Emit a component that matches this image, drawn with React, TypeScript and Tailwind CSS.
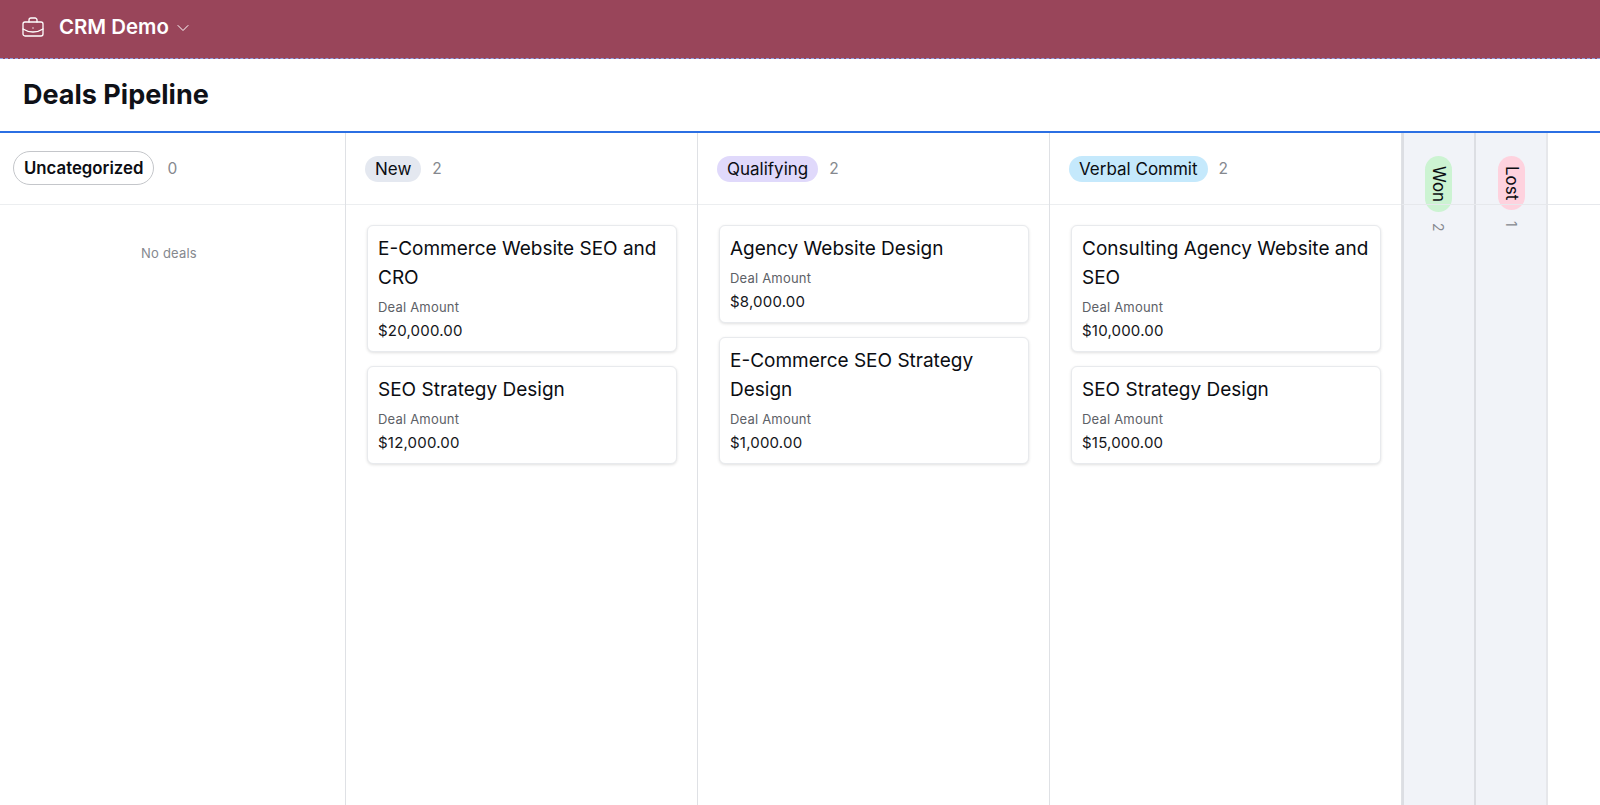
import React from "react";
import { BriefcaseBusiness, ChevronDown } from "lucide-react";

type Deal = { title: string; amount: string };

function Card({ title, amount }: Deal) {
  return (
    <div className="rounded-md border border-[#e8eaed] bg-white px-[10px] pt-[8px] pb-[9px] shadow-[0_1px_3px_rgba(0,0,0,0.12)]">
      <div className="text-[19px] leading-[29px] text-[#0b0d12]">{title}</div>
      <div className="mt-[4px] text-[13px] leading-[23px] tracking-[0.2px] text-[#5d6167]">Deal Amount</div>
      <div className="text-[15px] leading-[23px] tracking-[0.2px] text-[#14161a]">{amount}</div>
    </div>
  );
}

function Column({ label, pill, count, deals }: { label: string; pill: string; count: number; deals: Deal[] }) {
  return (
    <div className="flex w-[352px] shrink-0 flex-col border-r border-[#dfe1e5]">
      <div className="flex h-[72px] shrink-0 items-center border-b border-[#eceef0] pl-[19px]">
        <span className={`rounded-full px-[10px] text-[17px] leading-[26px] text-[#0b0d12] ${pill}`}>{label}</span>
        <span className="ml-[11px] text-[15.5px] text-[#85888e]">{count}</span>
      </div>
      <div className="flex flex-col gap-[14px] pt-[20px] pl-[21px] pr-[20px]">
        {deals.map((d) => (
          <Card key={d.title} {...d} />
        ))}
      </div>
    </div>
  );
}

function Collapsed({ label, pill, count, pad }: { label: string; pill: string; count: number; pad: string }) {
  return (
    <div className="flex w-[72px] shrink-0 flex-col border-l-2 border-[#dcdee3] bg-[#f1f3f8]">
      <div className={`flex flex-col items-center pt-[23px] ${pad}`}>
        <span className={`rounded-full px-[10px] text-[17px] leading-[27px] text-[#0b0d12] [writing-mode:vertical-rl] ${pill}`}>{label}</span>
        <span className="mt-[11px] text-[14px] leading-[20px] text-[#85888e] [writing-mode:vertical-rl]">{count}</span>
      </div>
    </div>
  );
}

export default function App() {
  return (
    <div className="flex h-[805px] w-[1600px] flex-col overflow-hidden bg-white font-['Inter',sans-serif]">
      <header className="flex h-[59px] shrink-0 items-center border-b border-dashed border-[#8f9fe0] bg-[#99455a] pb-[3px] pl-[21px] text-white">
        <BriefcaseBusiness size={24} strokeWidth={1.3} />
        <span className="ml-[14px] text-[20.4px] font-semibold">CRM Demo</span>
        <ChevronDown size={20} strokeWidth={1.2} className="ml-[4px]" />
      </header>
      <div className="flex h-[74px] shrink-0 items-center border-b-2 border-[#2b6fe3] pl-[23px]">
        <h1 className="text-[27px] font-bold text-[#0f1117]">Deals Pipeline</h1>
      </div>
      <div className="relative flex min-h-0 flex-1">
        <div className="flex w-[346px] shrink-0 flex-col border-r border-[#dfe1e5]">
          <div className="flex h-[72px] shrink-0 items-center border-b border-[#eceef0] pb-[2px] pl-[13px]">
            <span className="rounded-full border border-[#c4c6ca] px-[10px] text-[16.8px] font-semibold leading-[32px] text-[#0b0d12]">Uncategorized</span>
            <span className="ml-[13px] mt-[2px] text-[15.5px] text-[#85888e]">0</span>
          </div>
          <div className="pt-[39px] pr-[7px] text-center text-[13px] tracking-[0.2px] text-[#85888e]">No deals</div>
        </div>
        <Column
          label="New"
          pill="bg-[#e4e8f0]"
          count={2}
          deals={[
            { title: "E-Commerce Website SEO and CRO", amount: "$20,000.00" },
            { title: "SEO Strategy Design", amount: "$12,000.00" },
          ]}
        />
        <Column
          label="Qualifying"
          pill="bg-[#e0d9fb]"
          count={2}
          deals={[
            { title: "Agency Website Design", amount: "$8,000.00" },
            { title: "E-Commerce SEO Strategy Design", amount: "$1,000.00" },
          ]}
        />
        <Column
          label="Verbal Commit"
          pill="bg-[#c5e9fc]"
          count={2}
          deals={[
            { title: "Consulting Agency Website and SEO", amount: "$10,000.00" },
            { title: "SEO Strategy Design", amount: "$15,000.00" },
          ]}
        />
        <Collapsed label="Won" pill="bg-[#ccf3d2]" count={2} pad="pr-[2px]" />
        <Collapsed label="Lost" pill="bg-[#fed2de]" count={1} pad="" />
        <div className="flex-1 border-l-2 border-[#e6e7eb]" />
        <div className="pointer-events-none absolute left-[1402px] right-0 top-[71px] h-px bg-[#e6e8ec]" />
      </div>
    </div>
  );
}
